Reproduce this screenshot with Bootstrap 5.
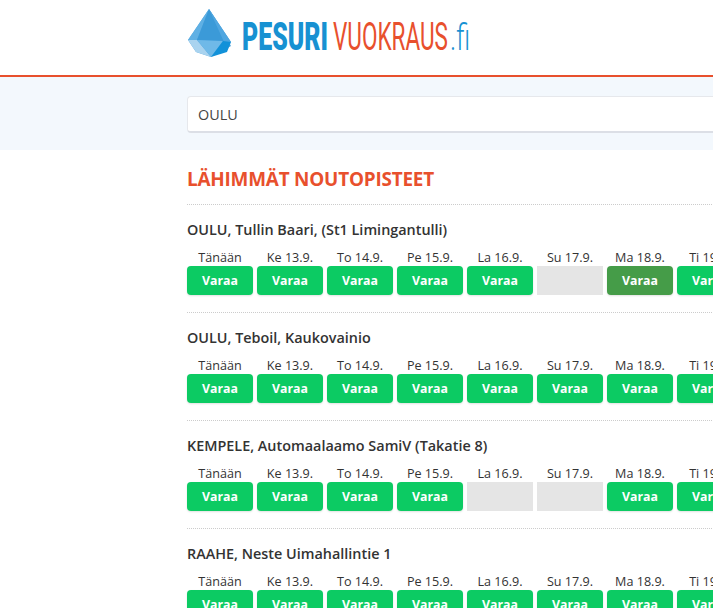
<!DOCTYPE html>
<html lang="fi">
<head>
<meta charset="utf-8">
<title>Pesurivuokraus.fi</title>
<link href="https://cdn.jsdelivr.net/npm/bootstrap@5.3.0/dist/css/bootstrap.min.css" rel="stylesheet">
<style>
html,body{overflow:hidden;height:608px}
body{font-family:"Open Sans",sans-serif;color:#333;background:#fff}
.site-head{height:77px;border-bottom:2px solid #e8502d;padding:8px 0 0 187px}
.logo-svg{display:block}
.search-band{height:73px;background:#f3f8fd;padding:19px 0 0 187px}
.search-input{width:700px;height:37px;border:1px solid #e6e8ec;border-bottom:2px solid #dcdfe6;border-radius:4px;padding:0 10px;font-size:14.4px;color:#444;box-shadow:none;background:#fff}
.results{padding-left:187px;width:1000px}
.results-title{font-size:18.9px;font-weight:700;letter-spacing:-.2px;color:#e8502d;margin:0;padding:17px 0 12px;line-height:25px;border-bottom:1px dotted #ccc}
.place{height:108px;border-bottom:1px dotted #ccc;padding-top:15px}
.place-name{font-size:14.4px;font-weight:600;color:#333;line-height:20px;margin:0 0 9px}
.slots{gap:4px}
.slot{width:66px;flex:none;text-align:center}
.slot-day{font-size:12.6px;line-height:18px;height:17px;color:#333;white-space:nowrap}
.slot-btn{display:block;width:66px;height:29px;padding:0;font-size:12.3px;font-weight:700;line-height:29px;color:#fff;background:#0ccb63;border:0;border-radius:4px;box-shadow:0 1px 2px rgba(0,0,0,.12)}
.slot-btn.picked{background:#459c48}
.slot-empty{height:29px;background:#e5e5e5}
</style>
</head>
<body>
<header class="site-head">
<svg class="logo-svg" width="290" height="52" viewBox="0 0 290 52" xmlns="http://www.w3.org/2000/svg">
  <polygon points="22,1 44,38 24,49 9,44 1,32" fill="#4fa3dc"/>
  <polygon points="22,1 10,32 1,32" fill="#5fb0e4"/>
  <polygon points="22,1 44,34 10,32" fill="#3b9ad8"/>
  <polygon points="22,1 44,34 37,34" fill="#4fa6e0"/>
  <polygon points="1,32 10,32 24,49 9,44" fill="#a9d3ef"/>
  <polygon points="10,32 36,33 24,49" fill="#6fb9e8"/>
  <polygon points="36,33 44,34 40,44 24,49" fill="#1191d9"/>
  <text y="42" font-family="Roboto, sans-serif" font-size="38"><tspan x="55" font-weight="900" fill="#1791d2" textLength="86" lengthAdjust="spacingAndGlyphs">PESURI</tspan><tspan x="146" font-weight="400" fill="#e8502d" textLength="115" lengthAdjust="spacingAndGlyphs">VUOKRAUS</tspan><tspan x="263" font-weight="300" font-size="36" fill="#1791d2" textLength="20" lengthAdjust="spacingAndGlyphs">.fi</tspan></text>
</svg>
</header>
<div class="search-band">
  <input class="form-control search-input" type="text" value="OULU" aria-label="Haku">
</div>
<main class="results">
  <h2 class="results-title">LÄHIMMÄT NOUTOPISTEET</h2>

  <section class="place">
    <h3 class="place-name">OULU, Tullin Baari, (St1 Limingantulli)</h3>
    <div class="d-flex slots">
      <div class="slot"><div class="slot-day">Tänään</div><button class="btn slot-btn">Varaa</button></div>
      <div class="slot"><div class="slot-day">Ke 13.9.</div><button class="btn slot-btn">Varaa</button></div>
      <div class="slot"><div class="slot-day">To 14.9.</div><button class="btn slot-btn">Varaa</button></div>
      <div class="slot"><div class="slot-day">Pe 15.9.</div><button class="btn slot-btn">Varaa</button></div>
      <div class="slot"><div class="slot-day">La 16.9.</div><button class="btn slot-btn">Varaa</button></div>
      <div class="slot"><div class="slot-day">Su 17.9.</div><div class="slot-empty"></div></div>
      <div class="slot"><div class="slot-day">Ma 18.9.</div><button class="btn slot-btn picked">Varaa</button></div>
      <div class="slot"><div class="slot-day">Ti 19.9.</div><button class="btn slot-btn">Varaa</button></div>
    </div>
  </section>

  <section class="place">
    <h3 class="place-name">OULU, Teboil, Kaukovainio</h3>
    <div class="d-flex slots">
      <div class="slot"><div class="slot-day">Tänään</div><button class="btn slot-btn">Varaa</button></div>
      <div class="slot"><div class="slot-day">Ke 13.9.</div><button class="btn slot-btn">Varaa</button></div>
      <div class="slot"><div class="slot-day">To 14.9.</div><button class="btn slot-btn">Varaa</button></div>
      <div class="slot"><div class="slot-day">Pe 15.9.</div><button class="btn slot-btn">Varaa</button></div>
      <div class="slot"><div class="slot-day">La 16.9.</div><button class="btn slot-btn">Varaa</button></div>
      <div class="slot"><div class="slot-day">Su 17.9.</div><button class="btn slot-btn">Varaa</button></div>
      <div class="slot"><div class="slot-day">Ma 18.9.</div><button class="btn slot-btn">Varaa</button></div>
      <div class="slot"><div class="slot-day">Ti 19.9.</div><button class="btn slot-btn">Varaa</button></div>
    </div>
  </section>

  <section class="place">
    <h3 class="place-name">KEMPELE, Automaalaamo SamiV (Takatie 8)</h3>
    <div class="d-flex slots">
      <div class="slot"><div class="slot-day">Tänään</div><button class="btn slot-btn">Varaa</button></div>
      <div class="slot"><div class="slot-day">Ke 13.9.</div><button class="btn slot-btn">Varaa</button></div>
      <div class="slot"><div class="slot-day">To 14.9.</div><button class="btn slot-btn">Varaa</button></div>
      <div class="slot"><div class="slot-day">Pe 15.9.</div><button class="btn slot-btn">Varaa</button></div>
      <div class="slot"><div class="slot-day">La 16.9.</div><div class="slot-empty"></div></div>
      <div class="slot"><div class="slot-day">Su 17.9.</div><div class="slot-empty"></div></div>
      <div class="slot"><div class="slot-day">Ma 18.9.</div><button class="btn slot-btn">Varaa</button></div>
      <div class="slot"><div class="slot-day">Ti 19.9.</div><button class="btn slot-btn">Varaa</button></div>
    </div>
  </section>

  <section class="place">
    <h3 class="place-name">RAAHE, Neste Uimahallintie 1</h3>
    <div class="d-flex slots">
      <div class="slot"><div class="slot-day">Tänään</div><button class="btn slot-btn">Varaa</button></div>
      <div class="slot"><div class="slot-day">Ke 13.9.</div><button class="btn slot-btn">Varaa</button></div>
      <div class="slot"><div class="slot-day">To 14.9.</div><button class="btn slot-btn">Varaa</button></div>
      <div class="slot"><div class="slot-day">Pe 15.9.</div><button class="btn slot-btn">Varaa</button></div>
      <div class="slot"><div class="slot-day">La 16.9.</div><button class="btn slot-btn">Varaa</button></div>
      <div class="slot"><div class="slot-day">Su 17.9.</div><button class="btn slot-btn">Varaa</button></div>
      <div class="slot"><div class="slot-day">Ma 18.9.</div><button class="btn slot-btn">Varaa</button></div>
      <div class="slot"><div class="slot-day">Ti 19.9.</div><button class="btn slot-btn">Varaa</button></div>
    </div>
  </section>
</main>
<script src="https://cdn.jsdelivr.net/npm/bootstrap@5.3.0/dist/js/bootstrap.bundle.min.js"></script>
</body>
</html>
